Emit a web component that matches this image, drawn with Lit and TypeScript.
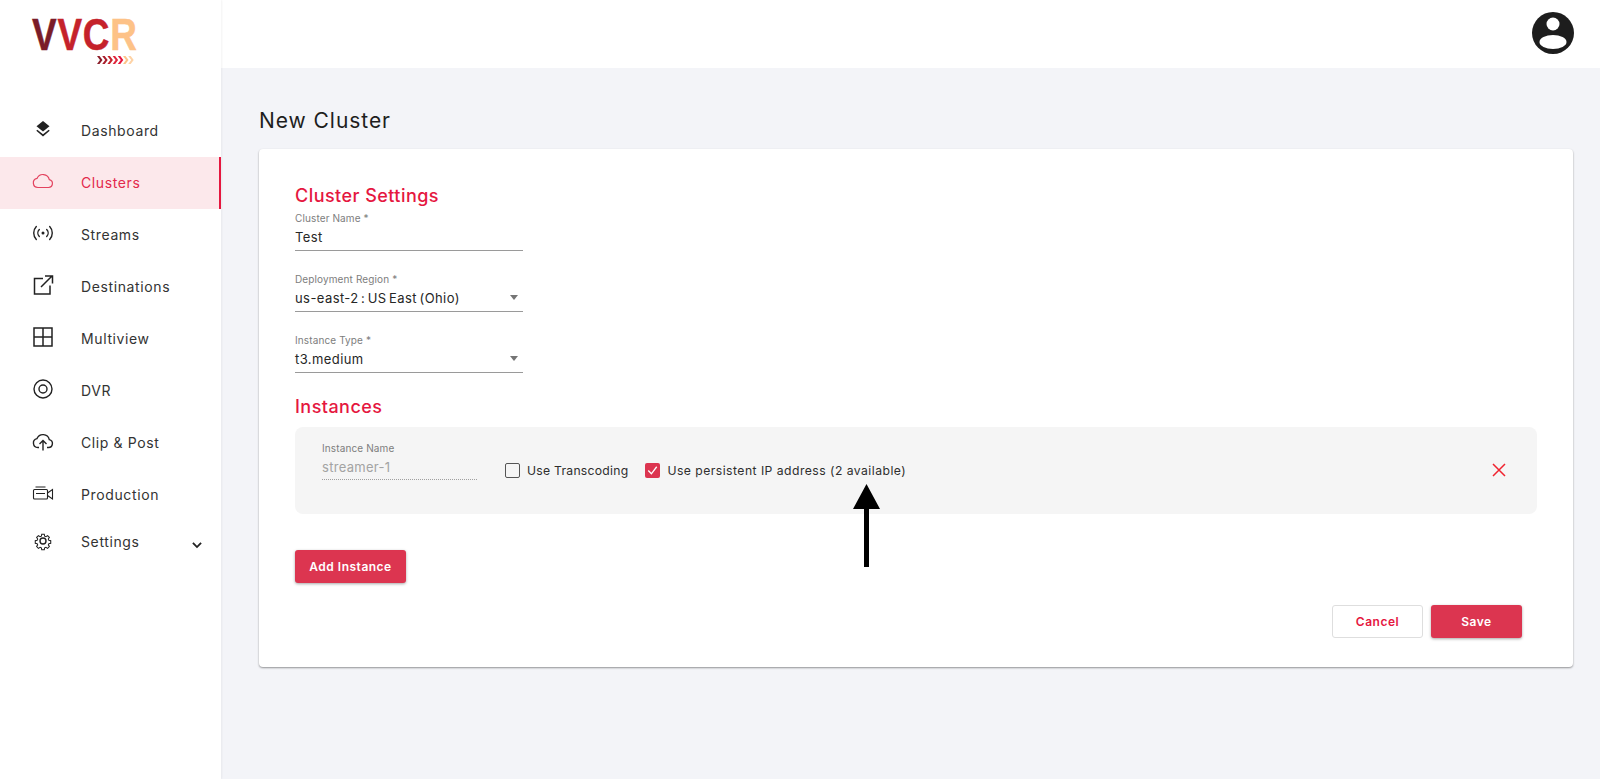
import { LitElement, html, css, svg } from "lit";
import { customElement } from "lit/decorators.js";

const icons: Record<string, unknown> = {
  dashboard: svg`<path d="M12 4 18.500 9.200 12 14.500 5.500 9.200Z" fill="currentColor"/><path d="M6.300 12.800 12 17.300 17.700 12.800 18.700 13.800 12 19.500 5.300 13.800Z" fill="currentColor"/>`,
  cloud: svg`<path d="M7 18.500h10.500a4 4 0 0 0 .8-7.900 6.500 6.500 0 0 0-12.300-1.200A4.600 4.600 0 0 0 7 18.500Z" fill="none" stroke="currentColor" stroke-width="1.200"/>`,
  streams: svg`<circle cx="12" cy="12" r="1.500" fill="currentColor"/><g fill="none" stroke="currentColor" stroke-width="1.400" stroke-linecap="round"><path d="M8.300 8.500a5 5 0 0 0 0 7M15.700 8.500a5 5 0 0 1 0 7"/><path d="M5.300 5.500a9.500 9.500 0 0 0 0 13M18.700 5.500a9.500 9.500 0 0 1 0 13"/></g>`,
  destinations: svg`<g fill="none" stroke="currentColor" stroke-width="1.500"><path d="M12 5.500H3.500V21H19V12.500"/><path d="M10 14 21 3M14 3h7.500v7.500"/></g>`,
  multiview: svg`<path d="M3 3h18v18H3ZM12 3v18M3 12h18" fill="none" stroke="currentColor" stroke-width="1.500"/>`,
  dvr: svg`<circle cx="12" cy="12" r="9" fill="none" stroke="currentColor" stroke-width="1.400"/><circle cx="12" cy="12" r="4" fill="none" stroke="currentColor" stroke-width="1.400"/>`,
  clip: svg`<path d="M8 18.500H7a4.500 4.500 0 0 1-1-8.900 6.500 6.500 0 0 1 12.300 1A4 4 0 0 1 17.500 18.500H16M12 21.500V11.500M8.500 15 12 11.500 15.500 15" fill="none" stroke="currentColor" stroke-width="1.400"/>`,
  production: svg`<g fill="none" stroke="currentColor" stroke-width="1.100"><rect x="2.500" y="8.500" width="14" height="9.500" rx="1"/><path d="M4.500 6h10M5 12.500h9"/><path d="M16.500 12 21.500 8.500V18L16.500 14.500"/></g>`,
  settings: svg`<g fill="none" stroke="currentColor" stroke-width="1.400"><circle cx="12" cy="12" r="3"/><path d="M10.300 3h3.400l.5 2.500 1.700.7 2.200-1.400 2.400 2.400-1.400 2.200.7 1.700 2.500.5v3.400l-2.500.5-.7 1.700 1.400 2.200-2.400 2.400-2.200-1.400-1.700.7-.5 2.500h-3.400l-.5-2.500-1.700-.7-2.200 1.400-2.400-2.400 1.400-2.200-.7-1.700-2.500-.5v-3.400l2.500-.5.7-1.700-1.400-2.200 2.400-2.400 2.200 1.400 1.700-.7Z" transform="translate(3 3) scale(.75)"/></g>`,
};

const nav = [
  { key: "dashboard", label: "Dashboard" },
  { key: "cloud", label: "Clusters", active: true },
  { key: "streams", label: "Streams" },
  { key: "destinations", label: "Destinations" },
  { key: "multiview", label: "Multiview" },
  { key: "dvr", label: "DVR" },
  { key: "clip", label: "Clip & Post" },
  { key: "production", label: "Production" },
];

@customElement("app-root")
export class AppRoot extends LitElement {
  static styles = css`
    :host {
      display: grid;
      grid-template-columns: 221px 1fr;
      height: 779px;
      overflow: hidden;
      font-family: Inter, "Noto Sans", sans-serif;
      color: #2b2b2b;
      background: #f3f4f8;
    }
    * { box-sizing: border-box; }
    .side {
      background: #fff;
      box-shadow: 1px 0 2px rgba(0, 0, 0, 0.05);
      position: relative;
      z-index: 2;
      display: flex;
      flex-direction: column;
    }
    .logo { height: 105px; padding: 11px 0 0 32px; }
    .word {
      display: flex;
      font: 700 45px/48px "Liberation Sans", sans-serif;
      -webkit-text-stroke: 0.5px currentColor;
      transform: scaleX(0.82);
      transform-origin: left;
      height: 45px;
    }
    .word span:not(:first-child) { margin-left: 1px; }
    .v1 { color: #7a1c28; }
    .v2 { color: #c5222b; }
    .c { color: #c5222b; }
    .r { color: #fdc287; }
    .chev {
      display: block;
      margin: 0 0 0 65px;
    }
    .item {
      height: 52px;
      display: flex;
      align-items: center;
      padding-left: 31px;
      font-size: 14px;
      letter-spacing: 0.62px;
      color: #333;
    }
    .item svg { width: 24px; height: 24px; flex: none; margin-top: -4px; color: #222; }
    .item span { margin-left: 26px; margin-top: -2px; }
    .item.on {
      background: #fce8eb;
      color: #e3294c;
      border-right: 2px solid #e5173f;
    }
    .item.on svg { color: #e3435f; }
    .item.settings { height: 44px; }
    .item.settings span { margin-top: -4px; }
    .item.settings .caret { width: 14px; height: 14px; margin: 4px 17px 0 auto; }
    .main { display: flex; flex-direction: column; min-width: 0; }
    .top {
      height: 68px;
      background: #fff;
      display: flex;
      justify-content: flex-end;
      align-items: center;
      padding-right: 26px;
      flex: none;
    }
    .avatar { width: 42px; height: 42px; display: block; margin-top: -2px; }
    .content { padding: 38px 27px 0 38px; }
    h1 {
      margin: 0 0 14px;
      font-size: 21px;
      line-height: 29px;
      font-weight: 400;
      letter-spacing: 0.95px;
      color: #1e1e1e;
    }
    .card {
      background: #fff;
      border-radius: 4px;
      box-shadow: 0 1px 2px rgba(0, 0, 0, 0.4);
      padding: 34px 36px 0;
      height: 518px;
    }
    h2 {
      margin: 0 0 3px;
      font-size: 18px;
      line-height: 26px;
      font-weight: 500;
      letter-spacing: 0.45px;
      color: #e5173f;
    }
    .field {
      width: 228px;
      height: 39px;
      margin-bottom: 22px;
      border-bottom: 1px solid #9a9a9a;
      position: relative;
    }
    .field label, .inst label {
      display: block;
      font-size: 10px;
      line-height: 13px;
      letter-spacing: 0.12px;
      color: #7d7d7d;
    }
    .field .val {
      font-size: 13px;
      line-height: 18px;
      margin-top: 3px;
      letter-spacing: 0.42px;
      word-spacing: -1.600px;
      color: #262626;
    }
    .tri {
      position: absolute;
      right: 5px;
      top: 22px;
      width: 0;
      height: 0;
      border: 4.500px solid transparent;
      border-top: 5px solid #757575;
      border-bottom: 0;
    }
    .h2b { margin-top: -1px; margin-bottom: 0; }
    .panel {
      margin-top: 7px;
      height: 87px;
      background: #f5f5f5;
      border-radius: 8px;
      display: flex;
      padding: 15px 30px 0 27px;
      align-items: flex-start;
    }
    .inst { width: 155px; height: 38px; border-bottom: 1px dotted #a0a0a0; }
    .inst .val {
      font-size: 13px;
      line-height: 18px;
      margin-top: 3px;
      letter-spacing: 0.3px;
      color: #a3a3a3;
    }
    .check {
      display: flex;
      align-items: center;
      font-size: 12.200px;
      letter-spacing: 0.46px;
      color: #2e2e2e;
      height: 20px;
      margin-top: 18px;
    }
    .check i {
      width: 15px;
      height: 15px;
      border: 1.500px solid #555;
      border-radius: 2px;
      margin-right: 7px;
      display: block;
      flex: none;
    }
    .check i.on { background: #dc3550; border: 0; }
    .check i svg { display: block; width: 100%; height: 100%; }
    .c1 { margin-left: 28px; letter-spacing: 0.25px; }
    .c2 { margin-left: 17px; }
    .x { margin-left: auto; width: 16px; height: 16px; margin-top: 20px; color: #f0232f; flex: none; }
    button {
      font: 600 12px/1 Inter, sans-serif;
      letter-spacing: 0.5px;
      border-radius: 3px;
      border: 0;
      background: #dc3550;
      color: #fff;
      box-shadow: 0 1px 3px rgba(0, 0, 0, 0.35);
      padding: 0;
      height: 33px;
    }
    .add { width: 111px; margin-top: 36px; display: block; }
    .actions { display: flex; justify-content: flex-end; gap: 8px; margin-top: 22px; padding-right: 15px; }
    .actions button { width: 91px; }
    .cancel { background: #fff; color: #e5173f; border: 1px solid #dedede; box-shadow: none; }
    .arrow { position: absolute; left: 852px; top: 483px; width: 29px; height: 85px; display: block; z-index: 3; }
  `;

  render() {
    return html`
      <aside class="side">
        <div class="logo">
          <div class="word"><span class="v1">V</span><span class="v2">V</span><span class="c">C</span><span class="r">R</span></div>
          <svg class="chev" width="38" height="9" viewBox="0 0 38 9">
            ${["#8a1c28", "#a81e2c", "#c5222b", "#e0263c", "#e5173f", "#fdc287", "#fed3a6"].map(
              (c, i) => svg`<path d="M${i * 5.2} 0h2.500l3 4-3 4h-2.500l3-4Z" fill=${c}/>`
            )}
          </svg>
        </div>
        ${nav.map(
          (n) => html`<div class="item ${n.active ? "on" : ""}">
            <svg viewBox="0 0 24 24">${icons[n.key]}</svg><span>${n.label}</span>
          </div>`
        )}
        <div class="item settings">
          <svg viewBox="0 0 24 24">${icons.settings}</svg><span>Settings</span>
          <svg class="caret" viewBox="0 0 24 24"><path d="M5 8.500 12 15.500 19 8.500" fill="none" stroke="#222" stroke-width="3.200"/></svg>
        </div>
      </aside>
      <div class="main">
        <header class="top">
          <svg class="avatar" viewBox="0 0 42 42">
            <circle cx="21" cy="21" r="21" fill="#1d1d1d"/>
            <circle cx="21" cy="12" r="6.500" fill="#fff"/>
            <ellipse cx="21" cy="30" rx="13.500" ry="7" fill="#fff"/>
          </svg>
        </header>
        <div class="content">
          <h1>New Cluster</h1>
          <section class="card">
            <h2>Cluster Settings</h2>
            <div class="field"><label>Cluster Name *</label><div class="val">Test</div></div>
            <div class="field"><label>Deployment Region *</label><div class="val">us-east-2 : US East (Ohio)</div><b class="tri"></b></div>
            <div class="field"><label>Instance Type *</label><div class="val">t3.medium</div><b class="tri"></b></div>
            <h2 class="h2b">Instances</h2>
            <div class="panel">
              <div class="inst"><label>Instance Name</label><div class="val">streamer-1</div></div>
              <div class="check c1"><i></i>Use Transcoding</div>
              <div class="check c2"><i class="on"><svg viewBox="0 0 16 16"><path d="M3.500 8 6.800 11.500 12.500 4" fill="none" stroke="#fff" stroke-width="1.400"/></svg></i>Use persistent IP address (2 available)</div>
              <svg class="x" viewBox="0 0 16 16"><path d="M2 2 14 14M14 2 2 14" stroke="currentColor" stroke-width="1.500"/></svg>
            </div>
            <button class="add">Add Instance</button>
            <div class="actions">
              <button class="cancel">Cancel</button>
              <button>Save</button>
            </div>
          </section>
        </div>
      </div>
      <svg class="arrow" viewBox="0 0 29 85"><path d="M14.500 1 28 26H17V84H12V26H1Z" fill="#000"/></svg>
    `;
  }
}
